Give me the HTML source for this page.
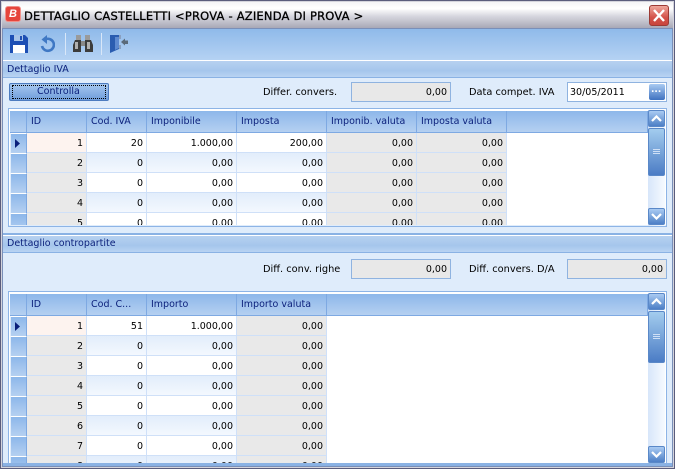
<!DOCTYPE html>
<html><head><meta charset="utf-8">
<style>
html,body{margin:0;padding:0;width:675px;height:469px;overflow:hidden;background:#dfecfb}
*{box-sizing:border-box}
body{position:relative;font-family:"DejaVu Sans","Liberation Sans",sans-serif;font-size:9.5px;color:#000}
.a{position:absolute}
.t{position:absolute;white-space:nowrap;line-height:12px}
.l{font-size:9.8px}
.nv{color:#0a1f7a}
.sec{position:absolute;left:3px;width:669px;height:18px;background:linear-gradient(#b7d1f0,#a5c6ec 60%,#b9d3f2);border-top:1px solid #fff;border-bottom:1px solid #8ab2e4}
.fld{position:absolute;height:20px;background:#e8e8e8;border:1px solid #8fb3e0;text-align:right;padding-right:3px;line-height:20px}
.grid{position:absolute;left:8px;width:659px;background:#fff;border:1px solid #8db4e6;overflow:hidden}
.hd{position:absolute;top:2px;height:22px;background:linear-gradient(#8db7ea,#b5d0f1);border-right:1px solid #7ea9e2;border-bottom:1px solid #7ea9e2;color:#0a1f7a;line-height:22px;padding-left:4px;white-space:nowrap}
.c{position:absolute;height:20px;border-right:1px solid #cfe0f8;border-bottom:1px solid #cfe0f8;text-align:right;padding-right:3px;line-height:21px;background:#fff}
.g{background:#e9e9e9}
.b{background:linear-gradient(#e2edfb,#f3f8fe)}
.s{position:absolute;left:1px;width:17px;height:20px;background:linear-gradient(#8db7ea,#b5d0f1);border-top:1px solid #fff;border-left:1px solid #dfecfb;border-right:1px solid #7ea9e2}
.sb{position:absolute;width:17px;background:linear-gradient(90deg,#d7e6fa,#f6faff)}
.btn{position:absolute;left:0;width:17px;height:17px;border-radius:2px;background:linear-gradient(#a9cbf2,#4d7fc6);border:1px solid #5a88c8}
.thumb{position:absolute;left:0;width:17px;border-radius:2px;background:linear-gradient(#a3ccee,#4b7cc5);border:1px solid #5a88c8}
</style></head><body>
<!-- window frame -->
<div class="a" style="left:0;top:0;width:675px;height:469px;background:#5a5c7c"></div>
<div class="a" style="left:1px;top:1px;width:673px;height:467px;background:#d4d4dc"></div>
<div class="a" style="left:2px;top:2px;width:671px;height:26px;background:linear-gradient(#f4f4f6,#fff 25%,#d6d6de 55%,#a8a8b6 100%)"></div>
<div class="a" style="left:2px;top:28px;width:671px;height:439px;background:#dfecfb;border:1px solid #7a8fb8"></div>
<!-- app icon -->
<div class="a" style="left:5px;top:6px;width:16px;height:16px;background:#e6453c;border-radius:3px;border:1px solid #f0908a"></div>
<div class="t" style="left:9px;top:8px;font:italic bold 11px 'Liberation Sans',sans-serif;color:#fff">B</div>
<div class="t" style="left:24px;top:10px;font-size:11.5px;letter-spacing:.2px;-webkit-text-stroke:.3px #000">DETTAGLIO CASTELLETTI &lt;PROVA - AZIENDA DI PROVA &gt;</div>
<!-- close -->
<div class="a" style="left:649px;top:5px;width:20px;height:21px;border-radius:3px;border:1px solid #9c3a34;background:linear-gradient(#eea79c,#d4534a 60%,#c8443c)"></div>
<svg class="a" style="left:649px;top:5px" width="20" height="21"><path d="M5 5L15 16M15 5L5 16" stroke="#fff" stroke-width="2.4"/></svg>
<!-- toolbar -->
<div class="a" style="left:3px;top:29px;width:669px;height:31px;background:linear-gradient(#8fbaea,#b5d2f3)"></div>
<div class="a" style="left:65px;top:33px;width:1px;height:22px;background:#d9e7f8"></div>
<div class="a" style="left:101px;top:33px;width:1px;height:22px;background:#d9e7f8"></div>
<!-- save -->
<svg class="a" style="left:10px;top:35px" width="18" height="18"><path d="M0 0H15L18 3V18H0Z" fill="#1d4fb4"/><rect x="4" y="0" width="9" height="6" fill="#a8c4e8"/><rect x="10" y="1" width="2" height="4" fill="#1d4fb4"/><rect x="3" y="10" width="12" height="8" fill="#fff"/></svg>
<!-- undo -->
<svg class="a" style="left:39px;top:35px" width="16" height="18"><path d="M6 4.5A6 6 0 1 1 3 11" fill="none" stroke="#3f78c4" stroke-width="2.6"/><path d="M8 0V9L2.5 4.5Z" fill="#3f78c4"/></svg>
<!-- binoculars -->
<svg class="a" style="left:73px;top:34px" width="20" height="19"><rect x="3" y="1" width="5" height="6" fill="#9a9a9a"/><rect x="12" y="1" width="5" height="6" fill="#9a9a9a"/><path d="M2 6H8V18H0V11Z" fill="#3c3c3c"/><path d="M12 6H18L20 11V18H12Z" fill="#3c3c3c"/><rect x="8" y="7" width="4" height="5" fill="#888"/><rect x="2" y="8" width="3" height="7" fill="#b0b0b0"/><rect x="14" y="8" width="3" height="7" fill="#b0b0b0"/></svg>
<!-- exit door -->
<svg class="a" style="left:110px;top:34px" width="19" height="19"><path d="M0 1H9V15L0 19Z" fill="#2a5cb0"/><path d="M5 3H9V14L5 16Z" fill="#5e8ad0"/><path d="M9 1H11V5H9ZM9 11H11V15H9Z" fill="#8aa0c0"/><path d="M11 8L15 4.5V6.5H18V10H15V11.5Z" fill="#5a6a7a"/></svg>

<!-- section 1 -->
<div class="sec" style="top:60px"></div>
<div class="t nv" style="left:7px;top:64px">Dettaglio IVA</div>
<!-- button -->
<div class="a" style="left:9px;top:83px;width:100px;height:18px;border-radius:2px;border:1px solid #4d7cc0;background:linear-gradient(#a7c8f0,#6f9dda)"></div>
<div class="a" style="left:12px;top:85px;width:94px;height:14px;border:1px dotted #000"></div>
<div class="t nv" style="left:37px;top:86px">Controlla</div>
<div class="t l" style="left:263px;top:87px">Differ. convers.</div>
<div class="fld" style="left:351px;top:82px;width:100px">0,00</div>
<div class="t l" style="left:469px;top:87px">Data compet. IVA</div>
<div class="fld" style="left:567px;top:82px;width:100px;background:#fff;text-align:left;padding-left:2px">30/05/2011</div>
<div class="a" style="left:649px;top:84px;width:16px;height:16px;border-radius:2px;background:linear-gradient(#a9cbf2,#3f72c0)"></div>
<div class="t" style="left:651px;top:86px;color:#fff;font-weight:bold;font-size:9px;line-height:9px">...</div>

<!-- grid 1 -->
<div class="grid" style="top:108px;height:119px">
<div class="hd" style="left:1px;width:17px;padding:0"></div>
<div class="hd" style="left:18px;width:60px">ID</div>
<div class="hd" style="left:78px;width:60px">Cod. IVA</div>
<div class="hd" style="left:138px;width:90px">Imponibile</div>
<div class="hd" style="left:228px;width:90px">Imposta</div>
<div class="hd" style="left:318px;width:90px">Imponib. valuta</div>
<div class="hd" style="left:408px;width:90px">Imposta valuta</div>
<div class="hd" style="left:498px;width:141px"></div>

<div class="s" style="top:24px"></div>
<svg class="a" style="left:6px;top:30px" width="6" height="9"><path d="M0 0L5 4.5L0 9Z" fill="#0a1f7a"/></svg>
<div class="c" style="left:18px;top:24px;width:60px;background:#fdf3ef">1</div><div class="c" style="left:78px;top:24px;width:60px">20</div><div class="c" style="left:138px;top:24px;width:90px">1.000,00</div><div class="c" style="left:228px;top:24px;width:90px">200,00</div><div class="c g" style="left:318px;top:24px;width:90px">0,00</div><div class="c g" style="left:408px;top:24px;width:90px">0,00</div>

<div class="s" style="top:44px"></div>
<div class="c g" style="left:18px;top:44px;width:60px">2</div><div class="c b" style="left:78px;top:44px;width:60px">0</div><div class="c b" style="left:138px;top:44px;width:90px">0,00</div><div class="c b" style="left:228px;top:44px;width:90px">0,00</div><div class="c g" style="left:318px;top:44px;width:90px">0,00</div><div class="c g" style="left:408px;top:44px;width:90px">0,00</div>

<div class="s" style="top:64px"></div>
<div class="c g" style="left:18px;top:64px;width:60px">3</div><div class="c" style="left:78px;top:64px;width:60px">0</div><div class="c" style="left:138px;top:64px;width:90px">0,00</div><div class="c" style="left:228px;top:64px;width:90px">0,00</div><div class="c g" style="left:318px;top:64px;width:90px">0,00</div><div class="c g" style="left:408px;top:64px;width:90px">0,00</div>

<div class="s" style="top:84px"></div>
<div class="c g" style="left:18px;top:84px;width:60px">4</div><div class="c b" style="left:78px;top:84px;width:60px">0</div><div class="c b" style="left:138px;top:84px;width:90px">0,00</div><div class="c b" style="left:228px;top:84px;width:90px">0,00</div><div class="c g" style="left:318px;top:84px;width:90px">0,00</div><div class="c g" style="left:408px;top:84px;width:90px">0,00</div>

<div class="s" style="top:104px"></div>
<div class="c g" style="left:18px;top:104px;width:60px">5</div><div class="c" style="left:78px;top:104px;width:60px">0</div><div class="c" style="left:138px;top:104px;width:90px">0,00</div><div class="c" style="left:228px;top:104px;width:90px">0,00</div><div class="c g" style="left:318px;top:104px;width:90px">0,00</div><div class="c g" style="left:408px;top:104px;width:90px">0,00</div>

<div class="a" style="left:0;top:116px;width:657px;height:1px;background:#dfecfb"></div>
<div class="sb" style="left:639px;top:1px;height:116px">
<div class="btn" style="top:0"></div>
<svg class="a" style="left:3px;top:5px" width="11" height="7"><path d="M1 6L5.5 1.5L10 6" fill="none" stroke="#fff" stroke-width="2.2"/></svg>
<div class="thumb" style="top:18px;height:48px"></div>
<div class="a" style="left:5px;top:39px;width:7px;height:1px;background:#cfe0f6;box-shadow:0 2px 0 #cfe0f6,0 4px 0 #cfe0f6"></div>
<div class="btn" style="top:98px"></div>
<svg class="a" style="left:3px;top:103px" width="11" height="7"><path d="M1 1L5.5 5.5L10 1" fill="none" stroke="#fff" stroke-width="2.2"/></svg>
</div>
</div>

<!-- section 2 -->
<div class="a" style="left:3px;top:232px;width:669px;height:3px;background:#8ab2e4;border-top:1px solid #dfecfb"></div>
<div class="sec" style="top:235px"></div>
<div class="t nv" style="left:7px;top:238px">Dettaglio contropartite</div>
<div class="t l" style="left:263px;top:264px">Diff. conv. righe</div>
<div class="fld" style="left:351px;top:259px;width:100px">0,00</div>
<div class="t l" style="left:469px;top:264px">Diff. convers. D/A</div>
<div class="fld" style="left:567px;top:259px;width:100px">0,00</div>

<!-- grid 2 -->
<div class="grid" style="top:291px;height:173px">
<div class="hd" style="left:1px;width:17px;padding:0"></div>
<div class="hd" style="left:18px;width:60px">ID</div>
<div class="hd" style="left:78px;width:60px">Cod. C...</div>
<div class="hd" style="left:138px;width:90px">Importo</div>
<div class="hd" style="left:228px;width:90px">Importo valuta</div>
<div class="hd" style="left:318px;width:321px"></div>

<div class="s" style="top:24px"></div>
<svg class="a" style="left:6px;top:30px" width="6" height="9"><path d="M0 0L5 4.5L0 9Z" fill="#0a1f7a"/></svg>
<div class="c" style="left:18px;top:24px;width:60px;background:#fdf3ef">1</div><div class="c" style="left:78px;top:24px;width:60px">51</div><div class="c" style="left:138px;top:24px;width:90px">1.000,00</div><div class="c g" style="left:228px;top:24px;width:90px">0,00</div>

<div class="s" style="top:44px"></div>
<div class="c g" style="left:18px;top:44px;width:60px">2</div><div class="c b" style="left:78px;top:44px;width:60px">0</div><div class="c b" style="left:138px;top:44px;width:90px">0,00</div><div class="c g" style="left:228px;top:44px;width:90px">0,00</div>

<div class="s" style="top:64px"></div>
<div class="c g" style="left:18px;top:64px;width:60px">3</div><div class="c" style="left:78px;top:64px;width:60px">0</div><div class="c" style="left:138px;top:64px;width:90px">0,00</div><div class="c g" style="left:228px;top:64px;width:90px">0,00</div>

<div class="s" style="top:84px"></div>
<div class="c g" style="left:18px;top:84px;width:60px">4</div><div class="c b" style="left:78px;top:84px;width:60px">0</div><div class="c b" style="left:138px;top:84px;width:90px">0,00</div><div class="c g" style="left:228px;top:84px;width:90px">0,00</div>

<div class="s" style="top:104px"></div>
<div class="c g" style="left:18px;top:104px;width:60px">5</div><div class="c" style="left:78px;top:104px;width:60px">0</div><div class="c" style="left:138px;top:104px;width:90px">0,00</div><div class="c g" style="left:228px;top:104px;width:90px">0,00</div>

<div class="s" style="top:124px"></div>
<div class="c g" style="left:18px;top:124px;width:60px">6</div><div class="c b" style="left:78px;top:124px;width:60px">0</div><div class="c b" style="left:138px;top:124px;width:90px">0,00</div><div class="c g" style="left:228px;top:124px;width:90px">0,00</div>

<div class="s" style="top:144px"></div>
<div class="c g" style="left:18px;top:144px;width:60px">7</div><div class="c" style="left:78px;top:144px;width:60px">0</div><div class="c" style="left:138px;top:144px;width:90px">0,00</div><div class="c g" style="left:228px;top:144px;width:90px">0,00</div>

<div class="s" style="top:164px"></div>
<div class="c g" style="left:18px;top:164px;width:60px">8</div><div class="c b" style="left:78px;top:164px;width:60px">0</div><div class="c b" style="left:138px;top:164px;width:90px">0,00</div><div class="c g" style="left:228px;top:164px;width:90px">0,00</div>

<div class="sb" style="left:639px;top:1px;height:170px">
<div class="btn" style="top:0"></div>
<svg class="a" style="left:3px;top:5px" width="11" height="7"><path d="M1 6L5.5 1.5L10 6" fill="none" stroke="#fff" stroke-width="2.2"/></svg>
<div class="thumb" style="top:18px;height:52px"></div>
<div class="a" style="left:5px;top:41px;width:7px;height:1px;background:#cfe0f6;box-shadow:0 2px 0 #cfe0f6,0 4px 0 #cfe0f6"></div>
<div class="btn" style="top:153px"></div>
<svg class="a" style="left:3px;top:158px" width="11" height="7"><path d="M1 1L5.5 5.5L10 1" fill="none" stroke="#fff" stroke-width="2.2"/></svg>
</div>
</div>
<div class="a" style="left:3px;top:463px;width:669px;height:3px;background:#8ab2e4"></div>
</body></html>
